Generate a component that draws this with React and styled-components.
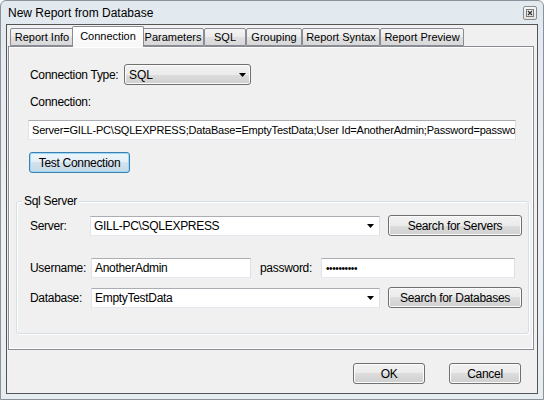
import React from "react";
import styled, { createGlobalStyle } from "styled-components";

const GlobalStyle = createGlobalStyle`
  html, body {
    margin: 0;
    padding: 0;
    background: #ffffff;
  }
  body {
    font-family: "Liberation Sans", Arial, sans-serif;
    font-size: 11px;
    color: #000;
  }
  * {
    box-sizing: border-box;
  }
`;

const Window = styled.div`
  width: 544px;
  height: 400px;
  border: 1px solid #8b9299;
  border-radius: 6px 6px 0 0;
  background: linear-gradient(180deg, #e2e9ef 0%, #edf1f4 60%, #e6edf1 100%);
  display: flex;
  flex-direction: column;
  padding: 0 5px 5px 5px;
`;

const TitleBar = styled.div`
  height: 23px;
  display: flex;
  align-items: center;
  justify-content: space-between;
  padding: 1px 1px 0 2px;
  font-size: 12px;
`;

const CloseBox = styled.div`
  width: 14px;
  height: 14px;
  border: 1px solid #8c8c8c;
  border-radius: 2px;
  background: linear-gradient(180deg, #f6f6f6, #e4e4e4);
  display: flex;
  align-items: center;
  justify-content: center;
`;

const Client = styled.div`
  flex: 1;
  border: 1px solid #555;
  background: #f0f0f0;
  display: flex;
  flex-direction: column;
  padding: 1px 3px 0 1px;
`;

const TabStrip = styled.div`
  height: 20px;
  display: flex;
  align-items: flex-end;
  padding-left: 2px;
  position: relative;
  z-index: 1;
`;

const Tab = styled.div`
  width: ${(p) => p.$w}px;
  height: ${(p) => (p.$active ? 21 : 18)}px;
  margin: ${(p) => (p.$active ? "0 -2px -1px -2px" : "0")};
  border: 1px solid #898c95;
  border-bottom: ${(p) => (p.$active ? "none" : "1px solid #898c95")};
  border-radius: 2px 2px 0 0;
  background: ${(p) =>
    p.$active
      ? "linear-gradient(180deg, #ffffff 0%, #f7f7f7 100%)"
      : "linear-gradient(180deg, #f4f4f4 0%, #ececec 50%, #e1e1e1 50%, #d8d8d8 100%)"};
  display: flex;
  align-items: center;
  justify-content: center;
  padding-bottom: ${(p) => (p.$active ? 3 : 0)}px;
  white-space: nowrap;
  font-size: 11px;
  z-index: ${(p) => (p.$active ? 2 : 1)};
`;

const Panel = styled.div`
  height: 304px;
  border: 1px solid #898c95;
  box-shadow: inset 1px 1px 0 #ffffff, inset -1px -1px 0 #ffffff;
  background: #f0f0f0;
  display: flex;
  flex-direction: column;
  padding: 17px 4px 0 7px;
`;

const TopBlock = styled.div`
  display: flex;
  flex-direction: column;
  align-items: flex-start;
  padding-left: 12px;
`;

const Row = styled.div`
  display: flex;
  align-items: center;
  margin-top: ${(p) => p.$top || 0}px;
  margin-left: ${(p) => p.$left || 0}px;
`;

const Label = styled.span`
  width: ${(p) => p.$w}px;
  padding-left: ${(p) => p.$pad || 0}px;
  margin-left: ${(p) => p.$left || 0}px;
  flex-shrink: 0;
  white-space: nowrap;
  font-size: 12px;
  letter-spacing: -0.3px;
`;

const Caption = styled.div`
  margin-top: ${(p) => p.$top || 0}px;
  padding-left: 2px;
  line-height: 14px;
  font-size: 12px;
  letter-spacing: -0.3px;
`;

const TextBox = styled.div`
  width: ${(p) => p.$w}px;
  height: 20px;
  margin-top: ${(p) => p.$top || 0}px;
  background: #fff;
  border: 1px solid;
  border-color: #abadb3 #dbdfe6 #e3e9ef #e2e3ea;
  display: flex;
  align-items: center;
  justify-content: space-between;
  padding: 0 5px 0 3px;
  white-space: nowrap;
  overflow: hidden;
  flex-shrink: 0;
  font-size: ${(p) => (p.$tight ? 11 : 12)}px;
  letter-spacing: ${(p) => (p.$tight ? -0.2 : -0.3)}px;
`;

const Dots = styled.span`
  font-size: 10px;
  letter-spacing: -0.4px;
  padding-left: 1px;
`;

const DropList = styled.div`
  width: 127px;
  height: 21px;
  border: 1px solid #707070;
  border-radius: 3px;
  background: linear-gradient(180deg, #f2f2f2 0%, #ebebeb 50%, #dddddd 50%, #cfcfcf 100%);
  box-shadow: inset 0 0 0 1px #fbfbfb;
  display: flex;
  align-items: center;
  justify-content: space-between;
  padding: 0 4px 0 4px;
  font-size: 12px;
`;

const Button = styled.button`
  width: ${(p) => p.$w}px;
  height: 21px;
  margin-top: ${(p) => p.$top || 0}px;
  margin-left: ${(p) => p.$left || 0}px;
  flex-shrink: 0;
  padding: 0;
  font-family: "Liberation Sans", Arial, sans-serif;
  font-size: 12px;
  letter-spacing: -0.3px;
  color: #000;
  border: 1px solid ${(p) => (p.$focused ? "#3c7fb1" : "#707070")};
  border-radius: 3px;
  background: ${(p) =>
    p.$focused
      ? "linear-gradient(180deg, #eef6fb 0%, #e3eef6 50%, #d3e2ee 50%, #c6d8e6 100%)"
      : "linear-gradient(180deg, #f2f2f2 0%, #ebebeb 50%, #dddddd 50%, #cfcfcf 100%)"};
  box-shadow: inset 0 0 0 1px ${(p) => (p.$focused ? "#9cd8f8" : "#fbfbfb")};
`;

const GroupBox = styled.div`
  position: relative;
  width: 513px;
  height: 133px;
  margin-top: 28px;
  border: 1px solid #d5dfe5;
  border-radius: 3px;
  box-shadow: inset 1px 1px 0 #ffffff, 1px 1px 0 #ffffff;
  padding: 13px 0 0 13px;
`;

const Legend = styled.span`
  position: absolute;
  top: -8px;
  left: 5px;
  padding: 0 2px;
  line-height: 14px;
  background: #f0f0f0;
  font-size: 12px;
  letter-spacing: -0.3px;
`;

const Footer = styled.div`
  display: flex;
  justify-content: flex-end;
  gap: 24px;
  padding: 13px 13px 0 0;
`;

const Arrow = () => (
  <svg width="7" height="4" viewBox="0 0 7 4">
    <path d="M0 0h7L3.5 4z" fill="#000" />
  </svg>
);

const CloseGlyph = () => (
  <svg width="8" height="8" viewBox="0 0 8 8">
    <rect x="0.5" y="0.5" width="7" height="7" fill="none" stroke="#7a7a7a" />
    <path d="M2 2l4 4M6 2l-4 4" stroke="#333" strokeWidth="1.2" />
  </svg>
);

const tabs = [
  ["Report Info", 64],
  ["Connection", 72],
  ["Parameters", 62],
  ["SQL", 42],
  ["Grouping", 56],
  ["Report Syntax", 78],
  ["Report Preview", 84],
];

export default function App() {
  return (
    <>
      <GlobalStyle />
      <Window>
        <TitleBar>
          <span>New Report from Database</span>
          <CloseBox>
            <CloseGlyph />
          </CloseBox>
        </TitleBar>
        <Client>
          <TabStrip>
            {tabs.map(([name, w]) => (
              <Tab key={name} $w={w} $active={name === "Connection"}>
                {name}
              </Tab>
            ))}
          </TabStrip>
          <Panel>
            <TopBlock>
              <Row>
                <Label $w={96} $pad={2}>
                  Connection Type:
                </Label>
                <DropList>
                  <span>SQL</span>
                  <Arrow />
                </DropList>
              </Row>
              <Caption $top={10}>Connection:</Caption>
              <TextBox $w={488} $top={11} $tight>
                Server=GILL-PC\SQLEXPRESS;DataBase=EmptyTestData;User Id=AnotherAdmin;Password=passwo
              </TextBox>
              <Button $w={101} $top={12} $left={1} $focused>
                Test Connection
              </Button>
            </TopBlock>
            <GroupBox>
              <Legend>Sql Server</Legend>
              <Row>
                <Label $w={60}>Server:</Label>
                <TextBox $w={290}>
                  <span>GILL-PC\SQLEXPRESS</span>
                  <Arrow />
                </TextBox>
                <Button $w={134} $left={8}>
                  Search for Servers
                </Button>
              </Row>
              <Row $top={22}>
                <Label $w={61}>Username:</Label>
                <TextBox $w={160}>AnotherAdmin</TextBox>
                <Label $w={61} $left={9}>
                  password:
                </Label>
                <TextBox $w={194}>
                  <Dots>••••••••••</Dots>
                </TextBox>
              </Row>
              <Row $top={9}>
                <Label $w={61}>Database:</Label>
                <TextBox $w={289}>
                  <span>EmptyTestData</span>
                  <Arrow />
                </TextBox>
                <Button $w={134} $left={8}>
                  Search for Databases
                </Button>
              </Row>
            </GroupBox>
          </Panel>
          <Footer>
            <Button $w={72}>OK</Button>
            <Button $w={72}>Cancel</Button>
          </Footer>
        </Client>
      </Window>
    </>
  );
}
